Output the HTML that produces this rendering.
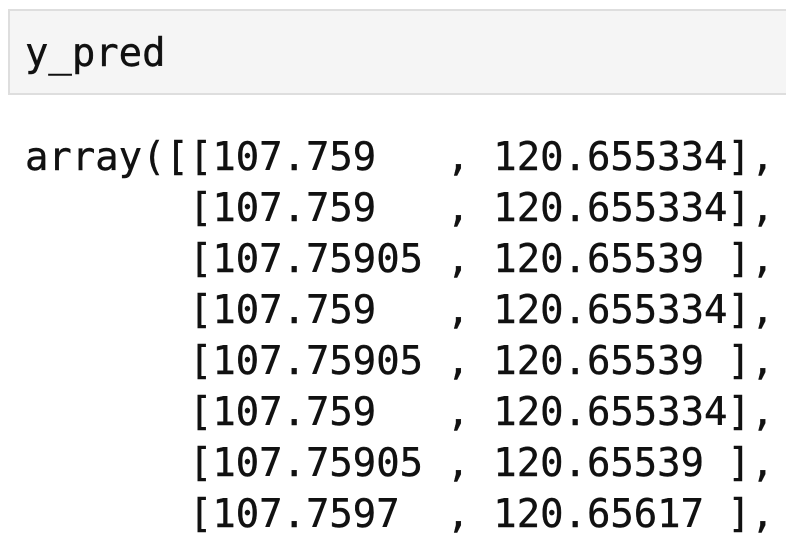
<!DOCTYPE html>
<html><head><meta charset="utf-8"><style>
html,body{margin:0;padding:0;background:#fff;width:786px;height:536px;overflow:hidden}
.f{font-family:"DejaVu Sans Mono","Liberation Mono",monospace;font-size:38.9px;color:#111;white-space:pre;position:absolute;left:25px;line-height:51px;-webkit-text-stroke:0.4px #111}
.box{position:absolute;left:8px;top:9px;width:800px;height:86px;background:#f5f5f5;border:2px solid #dedede;box-sizing:border-box}
</style></head><body>
<div class="box"></div>
<div class="f" style="top:28px">y_pred</div>
<div class="f" style="top:132px">array([[107.759   , 120.655334],
       [107.759   , 120.655334],
       [107.75905 , 120.65539 ],
       [107.759   , 120.655334],
       [107.75905 , 120.65539 ],
       [107.759   , 120.655334],
       [107.75905 , 120.65539 ],
       [107.7597  , 120.65617 ],</div>
</body></html>
